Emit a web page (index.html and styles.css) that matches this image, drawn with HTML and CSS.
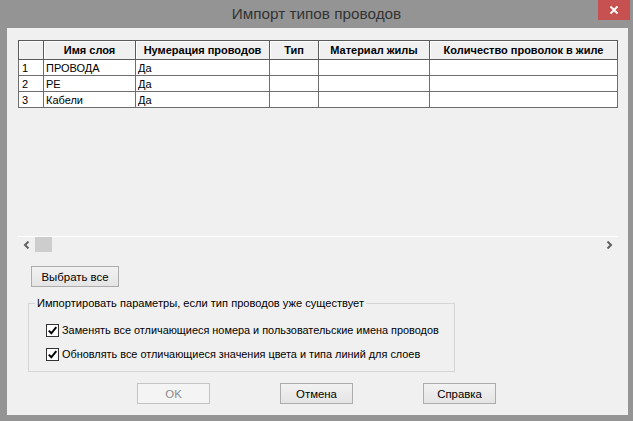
FILE: index.html
```html
<!DOCTYPE html>
<html lang="ru">
<head>
<meta charset="utf-8">
<title>Импорт типов проводов</title>
<link rel="stylesheet" href="styles.css">
</head>
<body>
<div class="window">
  <div class="titlebar">
    <span class="title">Импорт типов проводов</span>
    <div class="close"><svg width="10" height="10" viewBox="0 0 10 10"><path d="M1.5 1.5 L8.5 8.5 M8.5 1.5 L1.5 8.5" stroke="#fff" stroke-width="1.8" fill="none"/></svg></div>
  </div>
  <div class="client">
    <div class="grid">
      <div class="grid-body">
        <table class="sheet">
          <colgroup>
            <col class="c0"><col class="c1"><col class="c2"><col class="c3"><col class="c4"><col class="c5">
          </colgroup>
          <thead>
            <tr>
              <th></th>
              <th>Имя слоя</th>
              <th>Нумерация проводов</th>
              <th>Тип</th>
              <th>Материал жилы</th>
              <th>Количество проволок в жиле</th>
            </tr>
          </thead>
          <tbody>
            <tr><td class="num">1</td><td>ПРОВОДА</td><td>Да</td><td></td><td></td><td></td></tr>
            <tr><td class="num">2</td><td>PE</td><td>Да</td><td></td><td></td><td></td></tr>
            <tr><td class="num">3</td><td>Кабели</td><td>Да</td><td></td><td></td><td></td></tr>
          </tbody>
        </table>
      </div>
      <div class="hscroll">
        <svg class="arrow-left" width="7" height="8" viewBox="0 0 7 8"><path d="M5.5 0.5 L2 4 L5.5 7.5" stroke="#606060" stroke-width="2" fill="none"/></svg>
        <div class="thumb"></div>
        <div class="track"></div>
        <svg class="arrow-right" width="7" height="8" viewBox="0 0 7 8"><path d="M1.5 0.5 L5 4 L1.5 7.5" stroke="#606060" stroke-width="2" fill="none"/></svg>
      </div>
    </div>
    <div class="select-row">
      <button class="btn btn-wide">Выбрать все</button>
    </div>
    <fieldset class="group">
      <legend>Импортировать параметры, если тип проводов уже существует</legend>
      <div class="group-body">
        <label class="check-row">
          <span class="checkbox"><svg width="11" height="11" viewBox="0 0 11 11"><path d="M1.8 5.6 L4.3 8.3 L9.3 2.2" stroke="#000" stroke-width="2" fill="none"/></svg></span>
          <span class="check-text">Заменять все отличающиеся номера и пользовательские имена проводов</span>
        </label>
        <label class="check-row">
          <span class="checkbox"><svg width="11" height="11" viewBox="0 0 11 11"><path d="M1.8 5.6 L4.3 8.3 L9.3 2.2" stroke="#000" stroke-width="2" fill="none"/></svg></span>
          <span class="check-text">Обновлять все отличающиеся значения цвета и типа линий для слоев</span>
        </label>
      </div>
    </fieldset>
    <div class="buttons">
      <button class="btn" disabled>OK</button>
      <button class="btn">Отмена</button>
      <button class="btn">Справка</button>
    </div>
  </div>
</div>
</body>
</html>
```

FILE: styles.css
```css
html, body {
  margin: 0;
  padding: 0;
}
body {
  background: #949494;
  font-family: "Liberation Sans", Arial, sans-serif;
  color: #000;
}
.window {
  width: 633px;
  height: 421px;
  display: flex;
  flex-direction: column;
}
.titlebar {
  height: 28px;
  flex: none;
  position: relative;
  display: flex;
  align-items: center;
  justify-content: center;
}
.title {
  font-size: 15.3px;
  color: #333;
}
.close {
  position: absolute;
  top: 0;
  right: 3px;
  width: 32px;
  height: 20px;
  background: #c75050;
  display: flex;
  align-items: center;
  justify-content: center;
}
.client {
  flex: 1;
  margin: 0 5px 6px 7px;
  background: #f0f0f0;
  padding: 12px 0 0 11px;
  box-sizing: border-box;
}
.grid {
  width: 600px;
}
.grid-body {
  height: 196px;
}
.sheet {
  border-collapse: collapse;
  table-layout: fixed;
  width: 600px;
  font-size: 11px;
}
.c0 { width: 25px; }
.c1 { width: 92px; }
.c2 { width: 134px; }
.c3 { width: 49px; }
.c4 { width: 111px; }
.c5 { width: 188px; }
.sheet th {
  height: 18px;
  padding: 0;
  background: #f0f0f0;
  border: 1px solid #5a5a5a;
  font-weight: bold;
  text-align: center;
  box-shadow: inset 1px 1px 0 #fff;
  white-space: nowrap;
  overflow: hidden;
}
.sheet td {
  height: 15px;
  padding: 0 0 0 2px;
  background: #fff;
  border: 1px solid #6e6e6e;
  white-space: nowrap;
  overflow: hidden;
  line-height: 14px;
}
.sheet td.num {
  padding-left: 3px;
}
.hscroll {
  height: 16px;
  border-top: 1px solid #fff;
  display: flex;
  align-items: center;
}
.arrow-left {
  margin-left: 5px;
}
.thumb {
  width: 17px;
  height: 15px;
  margin-left: 5px;
  background: #cdcdcd;
  align-self: flex-start;
}
.track {
  flex: 1;
}
.arrow-right {
  margin-right: 5px;
}
.select-row {
  margin: 13px 0 0 13px;
}
.btn {
  width: 73px;
  height: 21px;
  padding: 0;
  border: 1px solid #acacac;
  background: linear-gradient(#f2f2f2, #e4e4e4);
  font-family: "Liberation Sans", Arial, sans-serif;
  font-size: 11.4px;
  color: #000;
}
.btn:disabled {
  border-color: #c4c4c4;
  background: #f4f4f4;
  color: #8b8b8b;
}
.btn-wide {
  width: 88px;
  display: block;
}
.group {
  margin: 9px 0 0 10px;
  padding: 0;
  width: 427px;
  box-sizing: border-box;
  border: 1px solid #d5d5d5;
  font-size: 11.1px;
}
.group legend {
  margin-left: 6px;
  padding: 0 2px;
  line-height: 14px;
  font-size: 11.1px;
}
.group-body {
  padding: 8px 0 5px 17px;
}
.check-row {
  height: 24px;
  display: flex;
  align-items: center;
  gap: 3px;
}
.check-text {
  white-space: nowrap;
  font-size: 10.9px;
}
.checkbox {
  flex: none;
  width: 13px;
  height: 13px;
  box-sizing: border-box;
  border: 1px solid #333;
  background: #fff;
  display: flex;
  align-items: center;
  justify-content: center;
}
.buttons {
  display: flex;
  gap: 70px;
  margin: 11px 0 0 119px;
}
```
